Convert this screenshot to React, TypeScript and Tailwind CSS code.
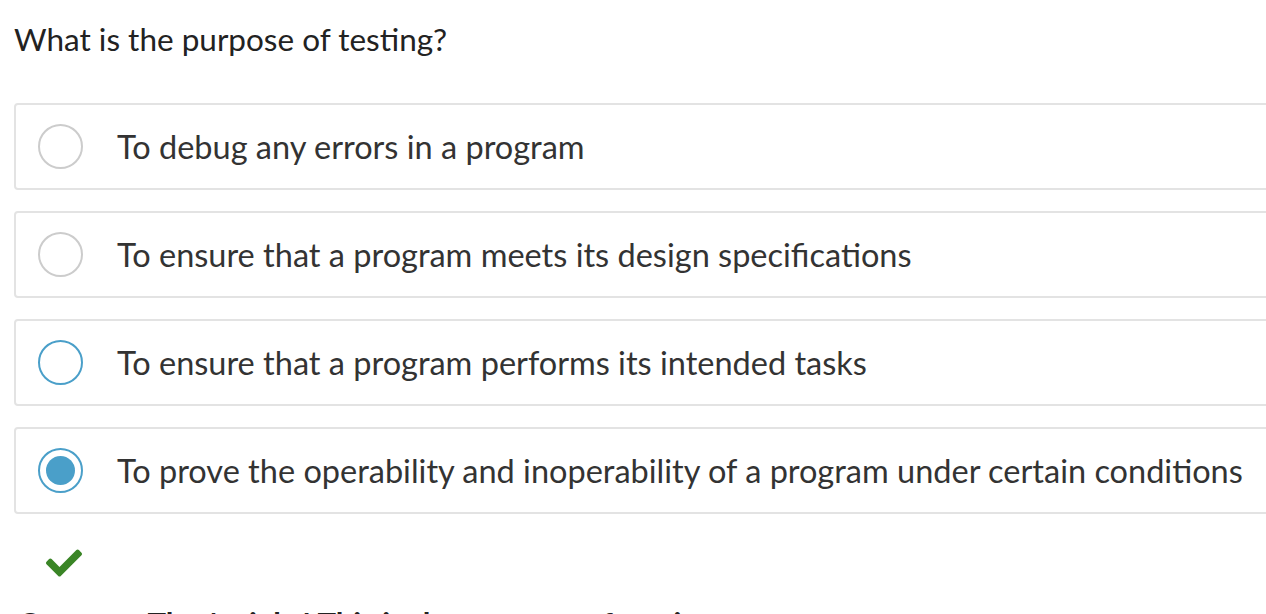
import { FaCheck } from 'react-icons/fa'

const options = [
  { label: 'To debug any errors in a program', state: 'idle' },
  { label: 'To ensure that a program meets its design specifications', state: 'idle' },
  { label: 'To ensure that a program performs its intended tasks', state: 'focus' },
  { label: 'To prove the operability and inoperability of a program under certain conditions', state: 'checked' },
]

function Radio({ state }: { state: string }) {
  if (state === 'idle') {
    return <span className="flex h-[45px] w-[45px] shrink-0 rounded-full border-2 border-[#cccccc] bg-white" />
  }
  return (
    <span className="flex h-[45px] w-[45px] shrink-0 items-center justify-center rounded-full border-2 border-[#4a9fc9] bg-white">
      {state === 'checked' && <span className="h-[29px] w-[29px] rounded-full bg-[#4a9fc9]" />}
    </span>
  )
}

export default function App() {
  return (
    <div className="h-screen w-full overflow-hidden bg-white font-['Lato',sans-serif] text-[#333333]">
      <div className="pl-[14px] pt-[17px]">
        <h2 className="text-[31.5px] leading-[44px] text-[#222222]">What is the purpose of testing?</h2>

        <div className="mt-[42px] flex w-[1300px] flex-col gap-[21px]">
          {options.map((o, i) => (
            <label
              key={i}
              className="flex h-[87px] items-center rounded-[4px] border-2 border-[#e3e3e3] pl-[22px]"
            >
              <Radio state={o.state} />
              <span className="ml-[34px] text-[32.5px] leading-[40px]">{o.label}</span>
            </label>
          ))}
        </div>

        <div className="mt-[31px] pl-[32px] text-[#3a8526]">
          <FaCheck size={36} />
        </div>

        <p className="mt-[22px] pl-[4px] text-[31px] font-bold leading-[40px] text-[#222222]">
          Correct - That's right! This is the purpose of testing.
        </p>
      </div>
    </div>
  )
}
